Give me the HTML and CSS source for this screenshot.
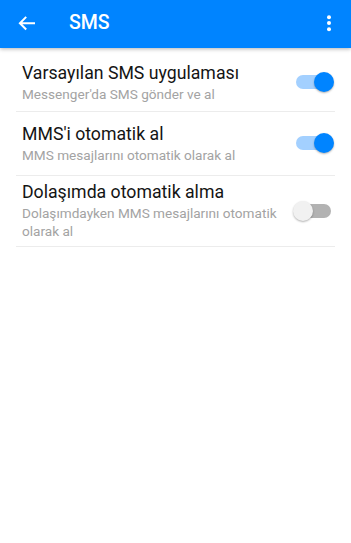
FILE: index.html
```html
<!DOCTYPE html>
<html lang="tr">
<head>
<meta charset="utf-8">
<title>SMS</title>
<link rel="stylesheet" href="styles.css">
</head>
<body>
<header class="appbar">
  <button class="icon-btn back" aria-label="Geri">
    <svg width="24" height="24" viewBox="0 0 24 24"><path d="M20 12.2H5.4M11.2 5.9L4.9 12.2l6.3 6.3" fill="none" stroke="#fff" stroke-width="2"/></svg>
  </button>
  <h1 class="title">SMS</h1>
  <button class="icon-btn more" aria-label="Diğer">
    <svg width="24" height="24" viewBox="0 0 24 24"><circle cx="12" cy="6.2" r="2" fill="#fff"/><circle cx="12" cy="12" r="2" fill="#fff"/><circle cx="12" cy="18.2" r="2" fill="#fff"/></svg>
  </button>
</header>
<ul class="prefs">
  <li class="pref">
    <div class="pref-text">
      <div class="pref-title">Varsayılan SMS uygulaması</div>
      <div class="pref-summary">Messenger'da SMS gönder ve al</div>
    </div>
    <span class="switch on"><span class="track"></span><span class="thumb"></span></span>
  </li>
  <li class="pref">
    <div class="pref-text">
      <div class="pref-title">MMS'i otomatik al</div>
      <div class="pref-summary">MMS mesajlarını otomatik olarak al</div>
    </div>
    <span class="switch on"><span class="track"></span><span class="thumb"></span></span>
  </li>
  <li class="pref">
    <div class="pref-text">
      <div class="pref-title">Dolaşımda otomatik alma</div>
      <div class="pref-summary">Dolaşımdayken MMS mesajlarını otomatik olarak al</div>
    </div>
    <span class="switch"><span class="track"></span><span class="thumb"></span></span>
  </li>
</ul>
</body>
</html>
```

FILE: styles.css
```css
* { box-sizing: border-box; }
html, body {
  margin: 0;
  padding: 0;
  background: #fff;
  font-family: Roboto, "Noto Sans", "Liberation Sans", sans-serif;
}
.appbar {
  position: relative;
  z-index: 1;
  height: 48px;
  background: #0084ff;
  display: flex;
  align-items: center;
  padding: 0 10px 3px 15px;
  box-shadow: 0 1px 4px rgba(0, 0, 0, 0.3);
}
.icon-btn {
  width: 24px;
  height: 24px;
  padding: 0;
  border: 0;
  background: none;
  display: flex;
}
.title {
  margin: 0 0 0 30px;
  flex: 1;
  color: #fff;
  font-size: 19.5px;
  font-weight: 500;
  line-height: 24px;
}
.prefs {
  list-style: none;
  margin: 0 16px;
  padding: 0;
}
.pref {
  display: flex;
  align-items: center;
  gap: 10px;
  min-height: 64px;
  padding: 5px 1px 6px 6px;
  border-bottom: 1px solid #ececec;
}
.pref:first-child {
  padding-top: 8px;
  padding-bottom: 3px;
}
.pref-text {
  flex: 1;
  min-width: 0;
}
.pref-title {
  font-size: 17.7px;
  line-height: 22px;
  color: #141414;
}
.pref-summary {
  margin-top: 1px;
  font-size: 13.6px;
  line-height: 18px;
  color: #a3a3a3;
}
.switch {
  position: relative;
  flex: none;
  width: 41px;
  height: 20px;
}
.track {
  position: absolute;
  left: 3px;
  right: 3px;
  top: 3px;
  height: 14px;
  border-radius: 7px;
  background: #b2b2b2;
}
.thumb {
  position: absolute;
  top: 0;
  left: 0;
  width: 20px;
  height: 20px;
  border-radius: 50%;
  background: #f1f1f1;
  box-shadow: 0 1px 2px rgba(0, 0, 0, 0.3);
}
.switch.on .track { background: #a3d0ff; }
.switch.on .thumb {
  left: auto;
  right: 0;
  background: #0084ff;
}
```
